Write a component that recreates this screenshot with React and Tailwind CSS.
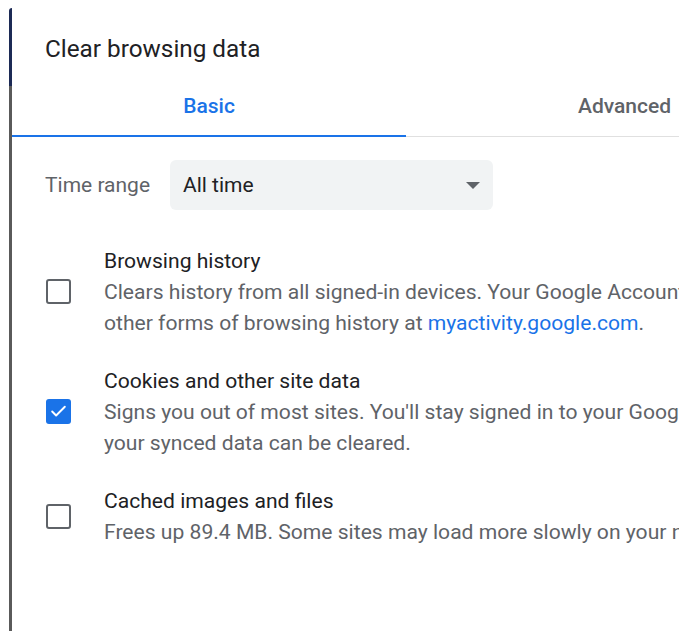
import { Check } from 'lucide-react';

const items = [
  {
    title: 'Browsing history',
    checked: false,
    lines: [
      ['Clears history from all signed-in devices. Your Google Account may have'],
      ['other forms of browsing history at ', { link: 'myactivity.google.com' }, '.'],
    ],
  },
  {
    title: 'Cookies and other site data',
    checked: true,
    lines: [
      ["Signs you out of most sites. You'll stay signed in to your Google Account so"],
      ['your synced data can be cleared.'],
    ],
  },
  {
    title: 'Cached images and files',
    checked: false,
    lines: [['Frees up 89.4 MB. Some sites may load more slowly on your next visit.']],
  },
];

const Checkbox = ({ checked }) =>
  checked ? (
    <div className="w-[25px] h-[25px] rounded-[3px] bg-[#1a73e8] flex items-center justify-center shrink-0">
      <Check size={19} strokeWidth={2.4} className="text-white" />
    </div>
  ) : (
    <div className="w-[25px] h-[25px] rounded-[3px] border-2 border-[#5f6368] shrink-0" />
  );

export default function App() {
  return (
    <div
      className="w-[679px] h-[631px] bg-white flex overflow-hidden"
      style={{ fontFamily: 'Roboto, "Liberation Sans", sans-serif' }}
    >
      {/* window edge on the left */}
      <div className="ml-[9px] mt-[8px] w-[3px] flex flex-col shrink-0">
        <div className="h-[78px] bg-[#1c2a55] rounded-tl-[3px]" />
        <div className="flex-1 bg-[#5a5a5a]" />
      </div>

      <div className="flex-1 flex flex-col min-w-0">
        <h1 className="pl-[33px] pt-[35px] text-[24.3px] leading-[28px] text-[#202124] whitespace-nowrap">
          Clear browsing data
        </h1>

        {/* tabs */}
        <div className="flex border-b border-[#e0e0e0] whitespace-nowrap">
          <div className="w-[394px] shrink-0 text-center pt-[27px] pb-[13px] leading-[32px] text-[21px] font-medium text-[#1a73e8] border-b-2 border-[#1a73e8] -mb-px">
            Basic
          </div>
          <div className="pl-[172px] pt-[27px] pb-[13px] leading-[32px] text-[21px] font-medium text-[#5f6368]">
            Advanced
          </div>
        </div>

        {/* time range */}
        <div className="flex items-center mt-[23px] pl-[33px]">
          <span className="w-[125px] pt-px text-[21px] text-[#5f6368] whitespace-nowrap">Time range</span>
          <div className="w-[323px] h-[50px] rounded-[6px] bg-[#f1f3f4] flex items-center justify-between pl-[13px] pr-[13px]">
            <span className="pt-px text-[21px] text-[#202124]">All time</span>
            <svg width="14" height="7" viewBox="0 0 14 7">
              <path d="M0 0h14L7 7z" fill="#5f6368" />
            </svg>
          </div>
        </div>

        {/* data types */}
        <div className="flex flex-col gap-[27px] mt-[35px]">
          {items.map((item) => (
            <div key={item.title} className="flex items-center pl-[34px] gap-[33px]">
              <Checkbox checked={item.checked} />
              <div className="text-[21.1px] leading-[31px] whitespace-nowrap">
                <div className="text-[#202124]">{item.title}</div>
                {item.lines.map((parts, i) => (
                  <div key={i} className="text-[#5f6368]">
                    {parts.map((p, j) =>
                      typeof p === 'string' ? (
                        <span key={j}>{p}</span>
                      ) : (
                        <span key={j} className="text-[#1a73e8]">{p.link}</span>
                      )
                    )}
                  </div>
                ))}
              </div>
            </div>
          ))}
        </div>
      </div>
    </div>
  );
}
